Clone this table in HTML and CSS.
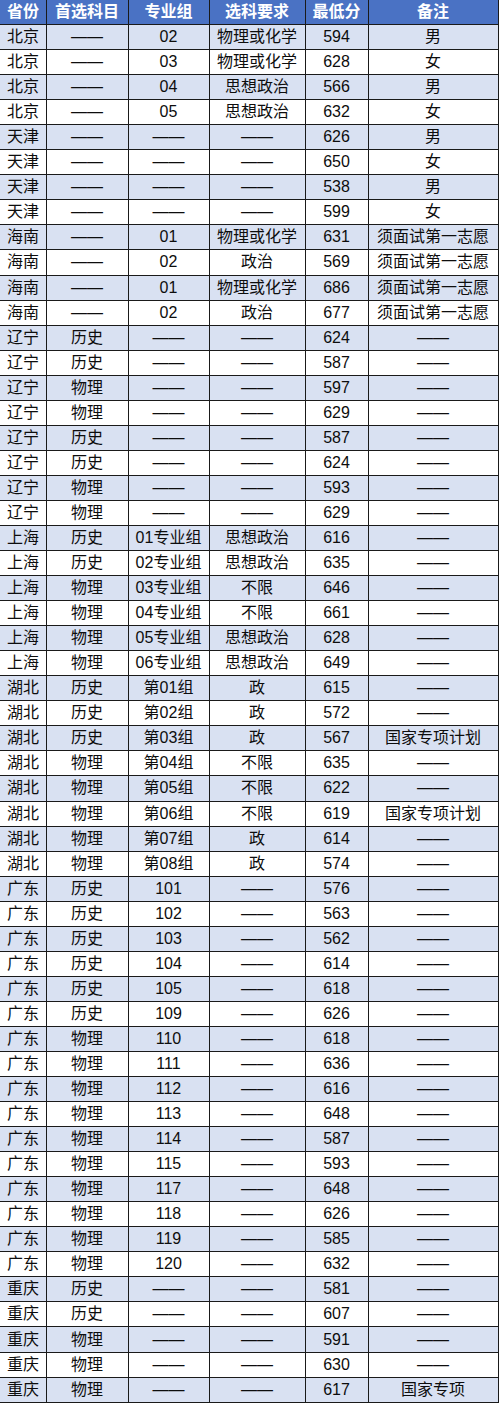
FILE: index.html
```html
<!DOCTYPE html>
<html lang="zh">
<head>
<meta charset="utf-8">
<link rel="stylesheet" href="styles.css">
</head>
<body>
<table class="scores">
<colgroup>
<col class="c1"><col class="c2"><col class="c3"><col class="c4"><col class="c5"><col class="c6">
</colgroup>
<thead>
<tr><th>省份</th><th>首选科目</th><th>专业组</th><th>选科要求</th><th>最低分</th><th>备注</th></tr>
</thead>
<tbody>
<tr><td>北京</td><td>——</td><td>02</td><td>物理或化学</td><td>594</td><td>男</td></tr>
<tr><td>北京</td><td>——</td><td>03</td><td>物理或化学</td><td>628</td><td>女</td></tr>
<tr><td>北京</td><td>——</td><td>04</td><td>思想政治</td><td>566</td><td>男</td></tr>
<tr><td>北京</td><td>——</td><td>05</td><td>思想政治</td><td>632</td><td>女</td></tr>
<tr><td>天津</td><td>——</td><td>——</td><td>——</td><td>626</td><td>男</td></tr>
<tr><td>天津</td><td>——</td><td>——</td><td>——</td><td>650</td><td>女</td></tr>
<tr><td>天津</td><td>——</td><td>——</td><td>——</td><td>538</td><td>男</td></tr>
<tr><td>天津</td><td>——</td><td>——</td><td>——</td><td>599</td><td>女</td></tr>
<tr><td>海南</td><td>——</td><td>01</td><td>物理或化学</td><td>631</td><td>须面试第一志愿</td></tr>
<tr><td>海南</td><td>——</td><td>02</td><td>政治</td><td>569</td><td>须面试第一志愿</td></tr>
<tr><td>海南</td><td>——</td><td>01</td><td>物理或化学</td><td>686</td><td>须面试第一志愿</td></tr>
<tr><td>海南</td><td>——</td><td>02</td><td>政治</td><td>677</td><td>须面试第一志愿</td></tr>
<tr><td>辽宁</td><td>历史</td><td>——</td><td>——</td><td>624</td><td>——</td></tr>
<tr><td>辽宁</td><td>历史</td><td>——</td><td>——</td><td>587</td><td>——</td></tr>
<tr><td>辽宁</td><td>物理</td><td>——</td><td>——</td><td>597</td><td>——</td></tr>
<tr><td>辽宁</td><td>物理</td><td>——</td><td>——</td><td>629</td><td>——</td></tr>
<tr><td>辽宁</td><td>历史</td><td>——</td><td>——</td><td>587</td><td>——</td></tr>
<tr><td>辽宁</td><td>历史</td><td>——</td><td>——</td><td>624</td><td>——</td></tr>
<tr><td>辽宁</td><td>物理</td><td>——</td><td>——</td><td>593</td><td>——</td></tr>
<tr><td>辽宁</td><td>物理</td><td>——</td><td>——</td><td>629</td><td>——</td></tr>
<tr><td>上海</td><td>历史</td><td>01专业组</td><td>思想政治</td><td>616</td><td>——</td></tr>
<tr><td>上海</td><td>历史</td><td>02专业组</td><td>思想政治</td><td>635</td><td>——</td></tr>
<tr><td>上海</td><td>物理</td><td>03专业组</td><td>不限</td><td>646</td><td>——</td></tr>
<tr><td>上海</td><td>物理</td><td>04专业组</td><td>不限</td><td>661</td><td>——</td></tr>
<tr><td>上海</td><td>物理</td><td>05专业组</td><td>思想政治</td><td>628</td><td>——</td></tr>
<tr><td>上海</td><td>物理</td><td>06专业组</td><td>思想政治</td><td>649</td><td>——</td></tr>
<tr><td>湖北</td><td>历史</td><td>第01组</td><td>政</td><td>615</td><td>——</td></tr>
<tr><td>湖北</td><td>历史</td><td>第02组</td><td>政</td><td>572</td><td>——</td></tr>
<tr><td>湖北</td><td>历史</td><td>第03组</td><td>政</td><td>567</td><td>国家专项计划</td></tr>
<tr><td>湖北</td><td>物理</td><td>第04组</td><td>不限</td><td>635</td><td>——</td></tr>
<tr><td>湖北</td><td>物理</td><td>第05组</td><td>不限</td><td>622</td><td>——</td></tr>
<tr><td>湖北</td><td>物理</td><td>第06组</td><td>不限</td><td>619</td><td>国家专项计划</td></tr>
<tr><td>湖北</td><td>物理</td><td>第07组</td><td>政</td><td>614</td><td>——</td></tr>
<tr><td>湖北</td><td>物理</td><td>第08组</td><td>政</td><td>574</td><td>——</td></tr>
<tr><td>广东</td><td>历史</td><td>101</td><td>——</td><td>576</td><td>——</td></tr>
<tr><td>广东</td><td>历史</td><td>102</td><td>——</td><td>563</td><td>——</td></tr>
<tr><td>广东</td><td>历史</td><td>103</td><td>——</td><td>562</td><td>——</td></tr>
<tr><td>广东</td><td>历史</td><td>104</td><td>——</td><td>614</td><td>——</td></tr>
<tr><td>广东</td><td>历史</td><td>105</td><td>——</td><td>618</td><td>——</td></tr>
<tr><td>广东</td><td>历史</td><td>109</td><td>——</td><td>626</td><td>——</td></tr>
<tr><td>广东</td><td>物理</td><td>110</td><td>——</td><td>618</td><td>——</td></tr>
<tr><td>广东</td><td>物理</td><td>111</td><td>——</td><td>636</td><td>——</td></tr>
<tr><td>广东</td><td>物理</td><td>112</td><td>——</td><td>616</td><td>——</td></tr>
<tr><td>广东</td><td>物理</td><td>113</td><td>——</td><td>648</td><td>——</td></tr>
<tr><td>广东</td><td>物理</td><td>114</td><td>——</td><td>587</td><td>——</td></tr>
<tr><td>广东</td><td>物理</td><td>115</td><td>——</td><td>593</td><td>——</td></tr>
<tr><td>广东</td><td>物理</td><td>117</td><td>——</td><td>648</td><td>——</td></tr>
<tr><td>广东</td><td>物理</td><td>118</td><td>——</td><td>626</td><td>——</td></tr>
<tr><td>广东</td><td>物理</td><td>119</td><td>——</td><td>585</td><td>——</td></tr>
<tr><td>广东</td><td>物理</td><td>120</td><td>——</td><td>632</td><td>——</td></tr>
<tr><td>重庆</td><td>历史</td><td>——</td><td>——</td><td>581</td><td>——</td></tr>
<tr><td>重庆</td><td>历史</td><td>——</td><td>——</td><td>607</td><td>——</td></tr>
<tr><td>重庆</td><td>物理</td><td>——</td><td>——</td><td>591</td><td>——</td></tr>
<tr><td>重庆</td><td>物理</td><td>——</td><td>——</td><td>630</td><td>——</td></tr>
<tr><td>重庆</td><td>物理</td><td>——</td><td>——</td><td>617</td><td>国家专项</td></tr>
</tbody>
</table>
</body>
</html>
```
FILE: styles.css
```css
html, body {
  margin: 0;
  padding: 0;
  background: #ffffff;
}
.scores {
  border-collapse: collapse;
  table-layout: fixed;
  width: 498px;
  font-family: "Liberation Sans", Arial, "Noto Sans CJK SC", sans-serif;
  font-size: 16px;
  color: #0d0d0d;
}
.c1 { width: 46px; }
.c2 { width: 82px; }
.c3 { width: 81px; }
.c4 { width: 96px; }
.c5 { width: 63px; }
.c6 { width: 130px; }
.scores th,
.scores td {
  border: 1px solid #1a1a1a;
  height: 24.06px;
  padding: 0;
  text-align: center;
  vertical-align: middle;
  line-height: 18px;
  white-space: nowrap;
  overflow: hidden;
}
.scores th:first-child,
.scores td:first-child {
  border-left: none;
  text-align: left;
  padding-left: 7px;
}
.scores thead th {
  background: #4a72c4;
  color: #ffffff;
  font-weight: bold;
  border-top: none;
}
.scores tbody tr:nth-child(odd) td {
  background: #d9e1f2;
}
.scores tbody tr:nth-child(even) td {
  background: #ffffff;
}
```
